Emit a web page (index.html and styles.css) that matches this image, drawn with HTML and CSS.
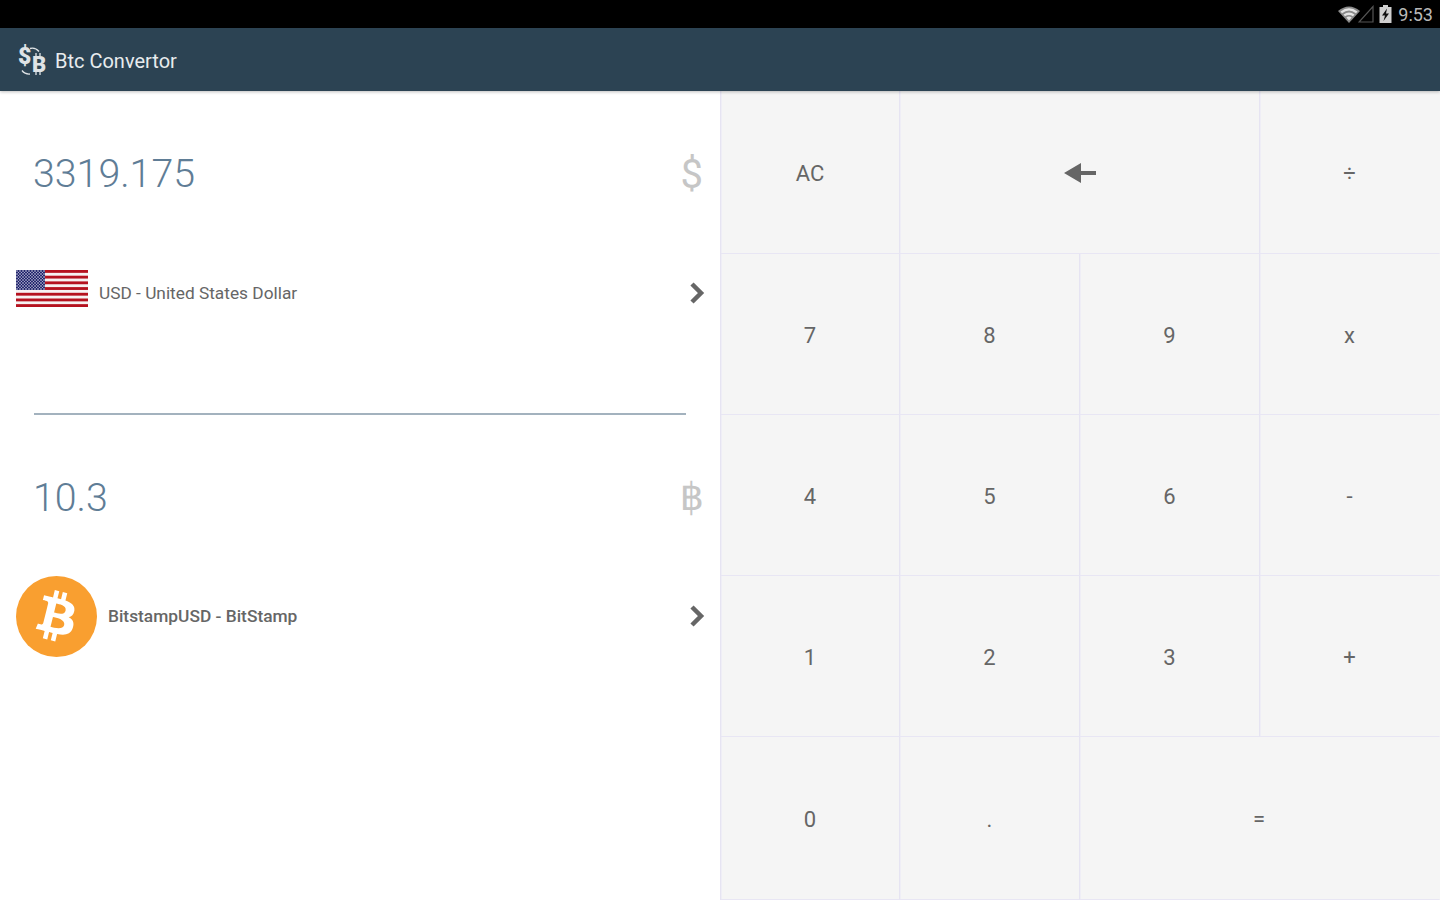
FILE: index.html
```html
<!DOCTYPE html>
<html lang="en">
<head>
<meta charset="utf-8">
<title>Btc Convertor</title>
<link rel="stylesheet" href="styles.css">
</head>
<body>
<div class="page">
  <div class="status">
    <svg class="wifi" width="22" height="18" viewBox="0 0 22 18">
      <path d="M0 6 Q11 -3 22 6 L11 18Z" fill="#8a8a8a"/>
      <path d="M2.500 6.600 Q11 0 19.500 6.600 L18 8.200 Q11 3 4 8.200Z" fill="#e4e4e4"/>
      <path d="M5.500 9.600 Q11 5.600 16.500 9.600 L15 11.200 Q11 8.600 7 11.200Z" fill="#e4e4e4"/>
      <path d="M8.400 12.400 Q11 10.600 13.600 12.400 L11 15.600Z" fill="#e4e4e4"/>
    </svg>
    <svg class="signal" width="16" height="18" viewBox="0 0 16 18">
      <path d="M15 1.500V17H1Z" fill="none" stroke="#555" stroke-width="1.200"/>
    </svg>
    <svg class="battery" width="13" height="18" viewBox="0 0 13 18">
      <path d="M4 0h5v2h3.500v16H.5V2H4z" fill="#d0d0d0"/>
      <path d="M8 3.500 3 10.500h3L4.500 16 10 8.500H7z" fill="#111"/>
    </svg>
    <span class="clock">9:53</span>
  </div>
  <header class="appbar">
    <svg class="logo" width="30" height="36" viewBox="0 -2 30 36">
      <path d="M13 3.500a9 9 0 0 1 9 3" fill="none" stroke="#dfe3e6" stroke-width="1.300"/>
      <path d="M13 29a9 9 0 0 1-8-3.500" fill="none" stroke="#dfe3e6" stroke-width="1.300"/>
      <path d="M19 8v3M23 8v3M19 27v3M23 27v3" stroke="#dfe3e6" stroke-width="1.300"/>
      <text class="logo-s" x="1" y="19">$</text>
      <text class="logo-b" x="15" y="27">B</text>
    </svg>
    <span class="title">Btc Convertor</span>
  </header>
  <main class="content">
    <section class="panel">
      <div class="converter">
        <div class="amount amount-top">
          <span class="value">3319.175</span>
          <span class="symbol">$</span>
        </div>
        <div class="selector">
          <svg class="flag" width="72" height="37" viewBox="0 0 72 37">
            <defs>
              <pattern id="stars" width="3" height="3" patternUnits="userSpaceOnUse">
                <rect width="3" height="3" fill="#23276e"/>
                <circle cx="1" cy="1" r=".8" fill="#d8d8e8"/>
                <circle cx="2.500" cy="2.500" r=".6" fill="#b8b8d8"/>
              </pattern>
            </defs>
            <rect width="72" height="37" fill="#f6f2f2"/>
            <g fill="#b5121f">
              <rect y="0" width="72" height="2.850"/>
              <rect y="5.700" width="72" height="2.850"/>
              <rect y="11.400" width="72" height="2.850"/>
              <rect y="17.100" width="72" height="2.850"/>
              <rect y="22.800" width="72" height="2.850"/>
              <rect y="28.500" width="72" height="2.850"/>
              <rect y="34.150" width="72" height="2.850"/>
            </g>
            <rect width="29" height="20" fill="url(#stars)"/>
          </svg>
          <span class="selector-name selector-usd">USD - United States Dollar</span>
          <svg class="chevron" width="16" height="22" viewBox="0 0 16 22"><path d="M3 2l9 9-9 9" fill="none" stroke="#666" stroke-width="4.500"/></svg>
        </div>
        <div class="rule"></div>
      </div>
      <div class="converter">
        <div class="amount">
          <span class="value">10.3</span>
          <span class="symbol symbol-btc">฿</span>
        </div>
        <div class="selector selector-tall">
          <svg class="coin" width="81" height="81" viewBox="0 0 64 64">
            <circle cx="32" cy="32" r="32" fill="#f99f30"/>
            <path fill="#fff" d="M46.110 27.441c.636-4.258-2.606-6.547-7.039-8.074l1.438-5.768-3.512-.875-1.400 5.616c-.922-.230-1.870-.447-2.812-.662l1.410-5.653-3.509-.875-1.439 5.766c-.764-.174-1.514-.346-2.242-.527l.004-.018-4.842-1.209-.934 3.750s2.605.597 2.550.634c1.422.355 1.680 1.296 1.636 2.042l-1.638 6.571c.098.025.225.061.365.117l-.370-.092-2.297 9.205c-.174.432-.615 1.080-1.609.834.035.051-2.552-.637-2.552-.637l-1.743 4.020 4.570 1.139c.850.213 1.683.436 2.502.646l-1.453 5.835 3.507.875 1.440-5.772c.957.260 1.887.500 2.797.726L27.504 50.800l3.511.875 1.453-5.823c5.987 1.133 10.490.676 12.383-4.738 1.527-4.360-.075-6.875-3.225-8.516 2.294-.531 4.022-2.040 4.483-5.157zM38.087 38.690c-1.086 4.360-8.426 2.004-10.807 1.412l1.928-7.729c2.380.594 10.011 1.770 8.880 6.317zm1.085-11.312c-.990 3.966-7.100 1.951-9.083 1.457l1.748-7.010c1.983.494 8.367 1.416 7.335 5.553z"/>
          </svg>
          <span class="selector-name selector-btc">BitstampUSD - BitStamp</span>
          <svg class="chevron" width="16" height="22" viewBox="0 0 16 22"><path d="M3 2l9 9-9 9" fill="none" stroke="#666" stroke-width="4.500"/></svg>
        </div>
      </div>
    </section>
    <section class="keypad">
      <div class="key">AC</div>
      <div class="key key-wide">
        <svg width="32" height="20" viewBox="0 0 32 20"><path d="M0 10 17 0v8h15v4H17v8z" fill="#666"/></svg>
      </div>
      <div class="key key-right">÷</div>
      <div class="key">7</div>
      <div class="key">8</div>
      <div class="key">9</div>
      <div class="key key-right">x</div>
      <div class="key">4</div>
      <div class="key">5</div>
      <div class="key">6</div>
      <div class="key key-right">-</div>
      <div class="key">1</div>
      <div class="key">2</div>
      <div class="key">3</div>
      <div class="key key-right">+</div>
      <div class="key">0</div>
      <div class="key">.</div>
      <div class="key key-wide key-right key-equals">=</div>
    </section>
  </main>
</div>
</body>
</html>
```
FILE: styles.css
```css
* { box-sizing: border-box; }
html, body { margin: 0; padding: 0; }
body { font-family: Roboto, "Liberation Sans", sans-serif; background: #fff; }
.page { width: 1440px; height: 900px; display: flex; flex-direction: column; overflow: hidden; }

.status { height: 28px; background: #000; display: flex; align-items: center; justify-content: flex-end; padding-right: 7px; }
.wifi { margin-right: -2px; }
.signal { margin-right: 5px; }
.battery { margin-right: 6px; }
.clock { color: #b9b9b9; font-size: 18px; }

.appbar { height: 63px; background: #2c4353; display: flex; align-items: center; padding: 3px 0 0 17px; gap: 8px; box-shadow: 0 1px 3px rgba(0,0,0,.25); position: relative; z-index: 1; }
.logo-s { font: 900 23px Roboto, sans-serif; fill: #dfe3e6; }
.logo-b { font: 900 22px Roboto, sans-serif; fill: #dfe3e6; }
.title { color: #e8ecee; font-size: 20px; }

.content { flex: 1; display: flex; min-height: 0; }
.panel { width: 720px; flex: none; }
.converter { height: 324px; }
.converter:first-child { height: 325px; }
.amount { height: 162px; display: flex; align-items: center; justify-content: space-between; padding: 0 18px 0 33px; }
.amount-top { height: 163px; padding-top: 1px; }
.value { font-size: 39.300px; font-weight: 300; color: #5f7d96; padding-top: 2px; }
.symbol { font-size: 40px; font-weight: 400; color: #c6c6c6; margin-right: -1px; padding-top: 2px; }
.symbol-btc { font-family: "DejaVu Sans", sans-serif; font-size: 38px; margin-right: -2px; padding-top: 0; }
.selector { height: 78px; display: flex; align-items: center; padding: 0 15px 0 16px; }
.selector-tall { height: 77px; }
.flag { flex: none; margin: 0 11px 10px 0; }
.coin { flex: none; margin-right: 11px; }
.selector-name { flex: 1; font-size: 17.300px; color: #666; }
.selector-btc { font-size: 17.350px; font-weight: 500; margin-bottom: 2px; }
.selector-tall .chevron { margin-bottom: 2px; }
.chevron { flex: none; }
.rule { height: 2px; background: #a3b2be; margin: 81px 34px 0 34px; }

.keypad { flex: 1; display: grid; grid-template-columns: 179px 180px 180px 1fr; grid-template-rows: 163px 161px 161px 161px 1fr; background: #f5f5f5; border-left: 1px solid #e6e4f2; box-shadow: inset 1px 0 0 #efeef6; }
.key { display: flex; align-items: center; justify-content: center; padding-top: 2px; font-size: 22px; color: #666; border-right: 1px solid #e6e4f2; border-bottom: 1px solid #e8e6f4; box-shadow: 1px 0 0 #efeef6; }
.key-wide { grid-column: span 2; }
.key-right { border-right-color: transparent; box-shadow: none; }
.key-equals { padding: 0 1px 0 0; }
```
